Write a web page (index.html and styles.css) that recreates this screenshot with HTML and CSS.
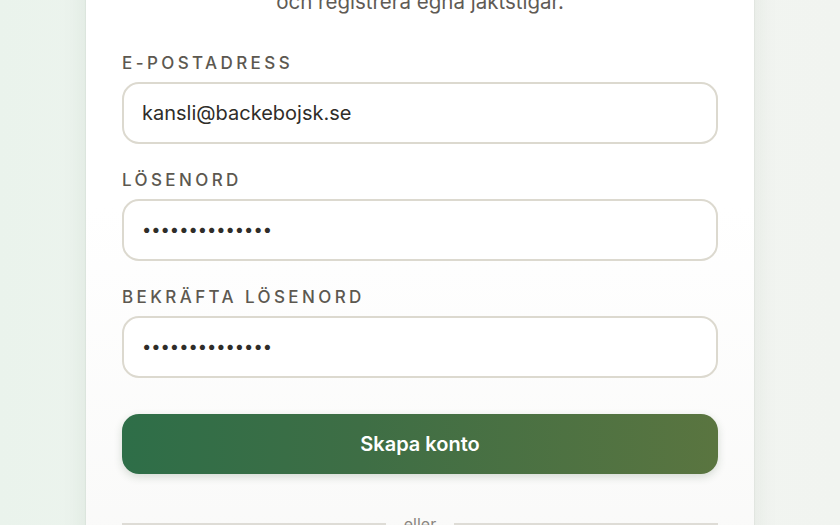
FILE: index.html
```html
<!DOCTYPE html>
<html lang="sv">
<head>
<meta charset="utf-8">
<title>Skapa konto</title>
<link rel="stylesheet" href="styles.css">
</head>
<body>
<main class="page">
  <section class="card">
    <p class="subtitle">och registrera egna jaktstigar.</p>
    <form class="form">
      <div class="field">
        <label class="label" for="email">E-postadress</label>
        <input class="input" id="email" type="email" value="kansli@backebojsk.se">
      </div>
      <div class="field">
        <label class="label" for="pw">Lösenord</label>
        <input class="input input-pw" id="pw" type="password" value="abcdefghijklmn">
      </div>
      <div class="field">
        <label class="label" for="pw2">Bekräfta lösenord</label>
        <input class="input input-pw" id="pw2" type="password" value="abcdefghijklmn">
      </div>
      <button class="btn" type="button">Skapa konto</button>
      <div class="divider"><span class="line"></span><span class="or">eller</span><span class="line"></span></div>
    </form>
  </section>
</main>
</body>
</html>
```

FILE: styles.css
```css
* { box-sizing: border-box; }
html, body {
  margin: 0;
  height: 100%;
  overflow: hidden;
}
body {
  font-family: "Inter", "Open Sans", sans-serif;
  background: linear-gradient(90deg, #eaf3ec 0%, #f3f6f2 50%, #f1f4f0 100%);
}
.page {
  display: flex;
  justify-content: center;
}
.card {
  width: 668px;
  margin-top: -37px;
  padding: 25px 36px 40px;
  background: linear-gradient(180deg, #ffffff 0%, #ffffff 40%, #f9f9f8 100%);
  box-shadow: 0 0 0 1px rgba(0,0,0,0.03), 0 4px 24px rgba(40,60,40,0.08);
}
.subtitle {
  margin: 0 0 36px;
  text-align: center;
  font-size: 20.5px;
  line-height: 28px;
  color: #5f5b55;
}
.form {
  display: flex;
  flex-direction: column;
}
.field {
  display: flex;
  flex-direction: column;
  margin-bottom: 25px;
}
.label {
  font-size: 17px;
  line-height: 22px;
  font-weight: 500;
  letter-spacing: 3.4px;
  text-transform: uppercase;
  color: #5c5850;
  margin-bottom: 8px;
}
.input {
  height: 62px;
  border: 2px solid #dcd9cf;
  border-radius: 17px;
  padding: 0 18px;
  font-family: inherit;
  font-size: 20px;
  color: #2f2d29;
  background: #fff;
  outline: none;
}
.input-pw {
  font-size: 16.5px;
  letter-spacing: 0;
  padding-bottom: 2px;
}
.btn {
  margin-top: 11px;
  height: 60px;
  border: none;
  border-radius: 17px;
  background: linear-gradient(90deg, #2e6e48 0%, #3e6e45 40%, #5a7540 100%);
  color: #fff;
  font-family: inherit;
  font-size: 20px;
  font-weight: 600;
  box-shadow: 0 3px 8px rgba(40,70,40,0.18);
}
.divider {
  margin-top: 40px;
  display: flex;
  align-items: center;
  gap: 18px;
}
.line {
  flex: 1;
  height: 1.5px;
  background: #dedcd6;
}
.or {
  font-size: 16px;
  color: #8a8680;
}
```
